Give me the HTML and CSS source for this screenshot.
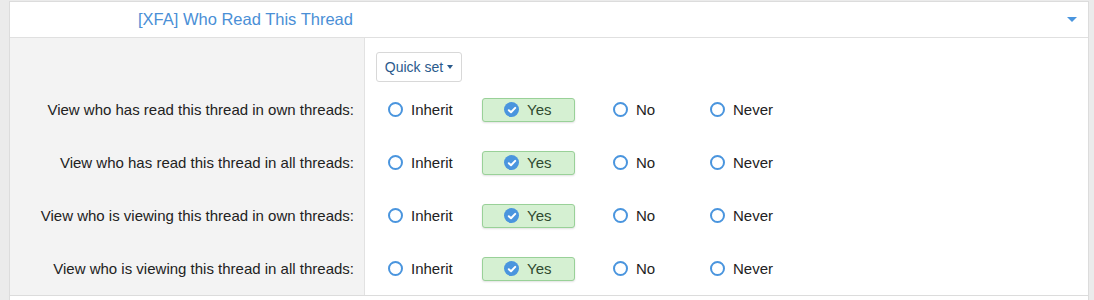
FILE: index.html
```html
<!DOCTYPE html>
<html lang="en">
<head>
    <meta charset="UTF-8">
    <title>Who Read This Thread</title>
    <link rel="stylesheet" href="styles.css">
</head>
<body>
    <div class="panel">
        <!-- Section header -->
        <div class="panel-head">
            <span class="panel-title">[XFA] Who Read This Thread</span>
            <span class="head-caret"></span>
        </div>

        <!-- Permission rows -->
        <div class="perm-grid">
            <div class="perm-label"></div>
            <div class="perm-cell quick-cell">
                <button class="quick-btn">Quick set <span class="small-caret"></span></button>
            </div>

            <div class="perm-label">View who has read this thread in own threads:</div>
            <div class="perm-cell">
                <div class="options">
                    <label class="opt"><span class="radio"></span>Inherit</label>
                    <label class="opt opt-yes"><span class="radio checked"><svg viewBox="0 0 14 14" width="14" height="14"><path d="M3.8 7.2 L6 9.3 L10.2 4.9" fill="none" stroke="#fff" stroke-width="2" stroke-linecap="round" stroke-linejoin="round"/></svg></span>Yes</label>
                    <label class="opt"><span class="radio"></span>No</label>
                    <label class="opt"><span class="radio"></span>Never</label>
                </div>
            </div>

            <div class="perm-label">View who has read this thread in all threads:</div>
            <div class="perm-cell">
                <div class="options">
                    <label class="opt"><span class="radio"></span>Inherit</label>
                    <label class="opt opt-yes"><span class="radio checked"><svg viewBox="0 0 14 14" width="14" height="14"><path d="M3.8 7.2 L6 9.3 L10.2 4.9" fill="none" stroke="#fff" stroke-width="2" stroke-linecap="round" stroke-linejoin="round"/></svg></span>Yes</label>
                    <label class="opt"><span class="radio"></span>No</label>
                    <label class="opt"><span class="radio"></span>Never</label>
                </div>
            </div>

            <div class="perm-label">View who is viewing this thread in own threads:</div>
            <div class="perm-cell">
                <div class="options">
                    <label class="opt"><span class="radio"></span>Inherit</label>
                    <label class="opt opt-yes"><span class="radio checked"><svg viewBox="0 0 14 14" width="14" height="14"><path d="M3.8 7.2 L6 9.3 L10.2 4.9" fill="none" stroke="#fff" stroke-width="2" stroke-linecap="round" stroke-linejoin="round"/></svg></span>Yes</label>
                    <label class="opt"><span class="radio"></span>No</label>
                    <label class="opt"><span class="radio"></span>Never</label>
                </div>
            </div>

            <div class="perm-label">View who is viewing this thread in all threads:</div>
            <div class="perm-cell">
                <div class="options">
                    <label class="opt"><span class="radio"></span>Inherit</label>
                    <label class="opt opt-yes"><span class="radio checked"><svg viewBox="0 0 14 14" width="14" height="14"><path d="M3.8 7.2 L6 9.3 L10.2 4.9" fill="none" stroke="#fff" stroke-width="2" stroke-linecap="round" stroke-linejoin="round"/></svg></span>Yes</label>
                    <label class="opt"><span class="radio"></span>No</label>
                    <label class="opt"><span class="radio"></span>Never</label>
                </div>
            </div>
        </div>

        <!-- Next section starts below -->
        <div class="panel-next"></div>
    </div>
</body>
</html>
```

FILE: styles.css
```css
* {
    margin: 0;
    padding: 0;
    box-sizing: border-box;
}

body {
    background: #ebebeb;
    font-family: 'Liberation Sans', Arial, sans-serif;
    font-size: 15px;
    color: #222;
    padding-top: 1px;
}

.panel {
    margin-left: 9px;
    width: 1080px;
    background: #fff;
    border: 1px solid #dcdcdc;
    border-bottom: none;
}

/* Header */
.panel-head {
    height: 36px;
    display: flex;
    align-items: center;
    justify-content: space-between;
    padding: 0 11px 0 128px;
    border-bottom: 1px solid #e0e0e0;
}

.panel-title {
    font-size: 16.5px;
    color: #4a8fd6;
}

.head-caret {
    width: 0;
    height: 0;
    border-left: 5px solid transparent;
    border-right: 5px solid transparent;
    border-top: 5px solid #4a95de;
}

/* Rows */
.perm-grid {
    display: grid;
    grid-template-columns: 355px 1fr;
    grid-template-rows: 45px repeat(4, 53px);
    border-bottom: 1px solid #dcdcdc;
}

.perm-label {
    background: #f3f3f3;
    border-right: 1px solid #e2e2e2;
    display: flex;
    align-items: center;
    justify-content: flex-end;
    padding-right: 10px;
}

.perm-cell {
    display: flex;
    align-items: center;
}

.quick-cell {
    align-items: flex-start;
    padding: 14px 0 0 11px;
}

.quick-btn {
    height: 30px;
    width: 86px;
    background: #fff;
    border: 1px solid #d8d8d8;
    border-radius: 3px;
    font-family: 'Liberation Sans', Arial, sans-serif;
    font-size: 14px;
    color: #2a5a8c;
    display: flex;
    align-items: center;
    justify-content: center;
    gap: 4px;
}

.small-caret {
    width: 0;
    height: 0;
    border-left: 3.5px solid transparent;
    border-right: 3.5px solid transparent;
    border-top: 4px solid #2a5a8c;
}

/* Radio options */
.options {
    display: grid;
    grid-template-columns: 117px 108px 97px auto;
    align-items: center;
}

.opt {
    justify-self: start;
    display: flex;
    align-items: center;
    gap: 8px;
    height: 24px;
    padding: 0 22px;
    border: 1px solid transparent;
    border-radius: 3px;
}

.opt-yes {
    width: 93px;
    padding-left: 21px;
    background: #d5f0d2;
    border-color: #99d198;
    color: #2f4a2f;
    box-shadow: 0 1px 2px rgba(0, 0, 0, 0.12);
}

.radio {
    width: 15px;
    height: 15px;
    border: 2px solid #4a95de;
    border-radius: 50%;
    flex-shrink: 0;
    display: flex;
    align-items: center;
    justify-content: center;
}

.radio.checked {
    background: #4a95de;
    border: none;
}

.panel-next {
    height: 10px;
    background: #fff;
}
```
